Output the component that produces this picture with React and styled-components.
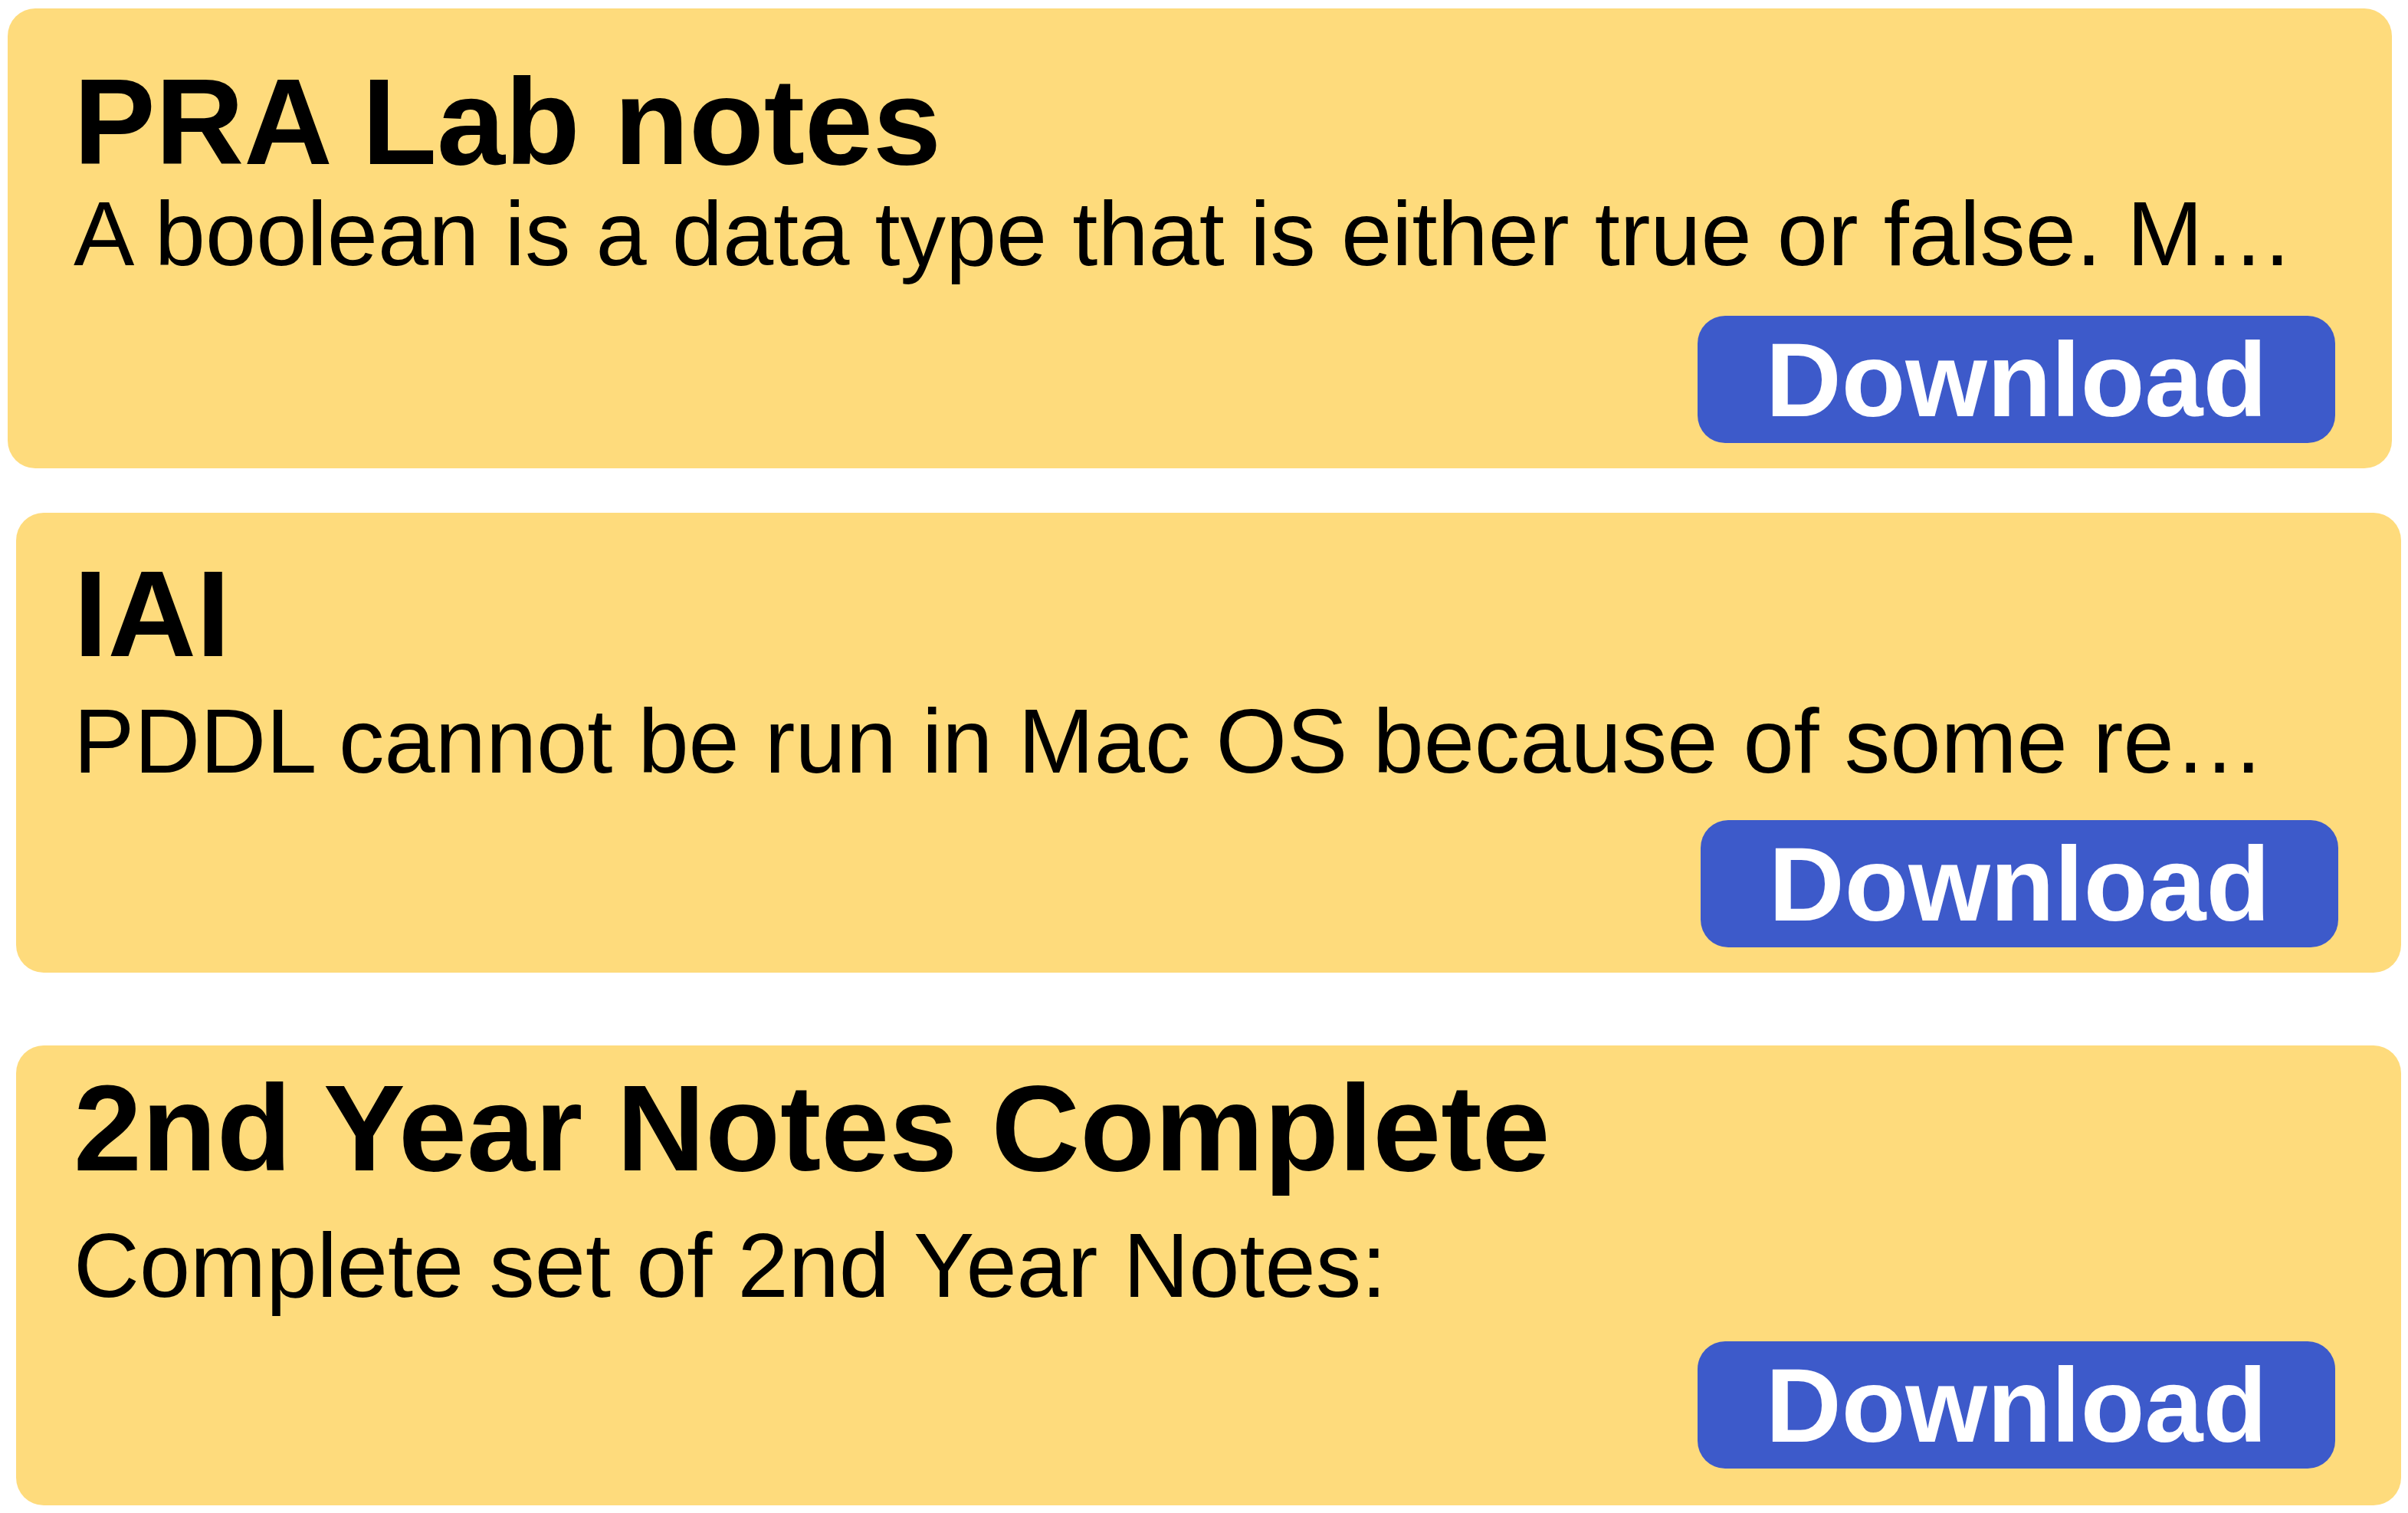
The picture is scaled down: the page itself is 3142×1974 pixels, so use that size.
import styled, { createGlobalStyle } from 'styled-components'

const notes = [
  {
    title: 'PRA Lab notes',
    text: 'A boolean is a data type that is either true or false. Many languages store it as a single byte.',
    card: { top: 11, left: 10, width: 3111 },
    titleTop: 68,
    textGap: 7,
    buttonRight: 74,
    buttonBottom: 33,
  },
  {
    title: 'IAI',
    text: 'PDDL cannot be run in Mac OS because of some restrictions in the planner binaries.',
    card: { top: 58, left: 21, width: 3112 },
    titleTop: 52,
    textGap: 27,
    buttonRight: 82,
    buttonBottom: 33,
  },
  {
    title: '2nd Year Notes Complete',
    text: 'Complete set of 2nd Year Notes:',
    card: { top: 95, left: 21, width: 3112 },
    titleTop: 28,
    textGap: 40,
    buttonRight: 86,
    buttonBottom: 48,
  },
]

const App = () => {
  return (
    <>
      <GlobalStyle />
      <NotesList>
        {notes.map((note) => (
          <NoteCard
            key={note.title}
            $top={note.card.top}
            $left={note.card.left}
            $width={note.card.width}
          >
            <NoteTitle $top={note.titleTop}>{note.title}</NoteTitle>
            <NoteText $gap={note.textGap}>{note.text}</NoteText>
            <DownloadButton $right={note.buttonRight} $bottom={note.buttonBottom}>
              Download
            </DownloadButton>
          </NoteCard>
        ))}
      </NotesList>
    </>
  );
}

export default App;

const GlobalStyle = createGlobalStyle`
  body {
    margin: 0;
    background: #ffffff;
    font-family: "Liberation Sans", Arial, Helvetica, sans-serif;
  }
`

const NotesList = styled.main`
  display: flex;
  flex-direction: column;
  align-items: flex-start;
`

const NoteCard = styled.section`
  box-sizing: border-box;
  display: flex;
  flex-direction: column;
  width: ${(p) => p.$width}px;
  height: 600px;
  margin-top: ${(p) => p.$top}px;
  margin-left: ${(p) => p.$left}px;
  padding-left: ${(p) => 96 - p.$left}px;
  background-color: #fedb7c;
  border-radius: 36px;
`

const NoteTitle = styled.h2`
  margin: ${(p) => p.$top}px 0 0;
  font-size: 160px;
  font-weight: 700;
  line-height: 1;
  color: #000;
`

// line-height 1.2 keeps descenders inside the clipped box
const NoteText = styled.p`
  margin: ${(p) => p.$gap - 12}px 0 0;
  max-width: 2905px;
  font-size: 119px;
  line-height: 1.2;
  color: #000;
  white-space: nowrap;
  overflow: hidden;
  text-overflow: ellipsis;
`

const DownloadButton = styled.button`
  align-self: flex-end;
  margin: auto ${(p) => p.$right}px ${(p) => p.$bottom}px 0;
  width: 832px;
  height: 166px;
  padding: 0;
  border: none;
  border-radius: 36px;
  background-color: #3d5aca;
  color: #fff;
  font-family: "Liberation Sans", Arial, Helvetica, sans-serif;
  font-size: 137px;
  font-weight: 700;
  line-height: 1;
  cursor: pointer;
`
